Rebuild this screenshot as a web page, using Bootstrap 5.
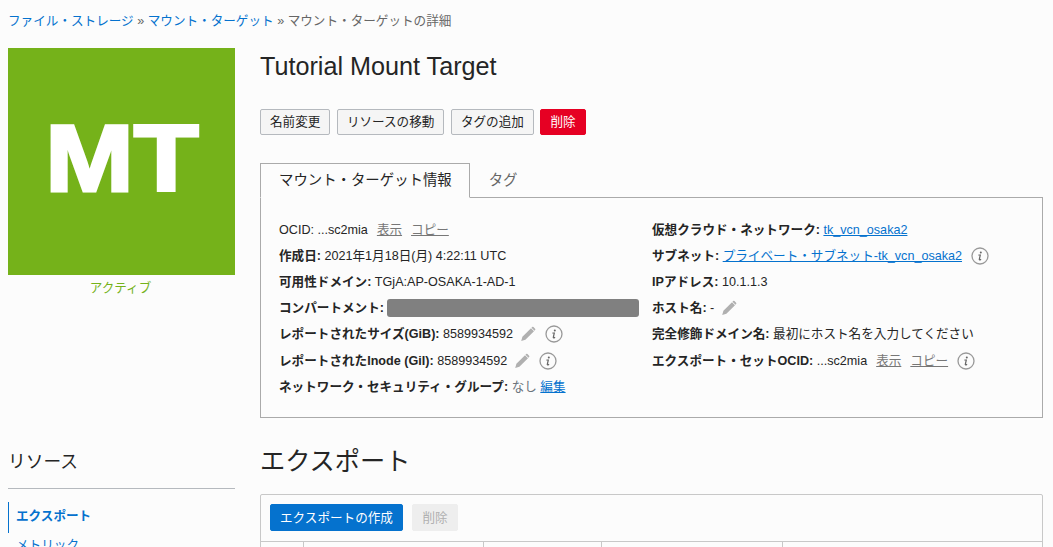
<!DOCTYPE html>
<html lang="ja">
<head>
<meta charset="utf-8">
<title>Tutorial Mount Target</title>
<link rel="stylesheet" href="https://cdn.jsdelivr.net/npm/bootstrap@5.3.0/dist/css/bootstrap.min.css">
<style>
html,body{height:547px;overflow:hidden}
body{background:#fcfcfc;color:#252525;font-family:"Liberation Sans","Noto Sans CJK JP",sans-serif;font-size:12.6px;padding:0 10px 0 8px}
a{color:#0572ce}
.crumbs{height:48px;padding-top:13px;font-size:12.6px;line-height:17px;color:#666}
.crumbs a{text-decoration:none}
.crumbs i{font-style:normal;margin:0 3.5px}
.side{width:227px;flex:none}
.main-col{margin-left:25px;flex:1;min-width:0}
.tile{height:227px;background:#75b21a;color:#fff;font-weight:700;font-size:94px;line-height:1;padding-top:64px;-webkit-text-stroke:3px #fff}
.tile span{display:inline-block;transform:scaleX(1.13)}
.state{color:#75b21a;font-size:12.6px;line-height:17px;margin-top:5px;padding-right:2px}
.title-h{font-size:25.2px;line-height:30px;margin:3px 0 28px;font-weight:400;color:#252525}
.act{font-size:12.6px;line-height:18px;height:26px;padding:3px 9px;border:1px solid #b5b9be;border-radius:2px;background:#f5f5f5;color:#252525;white-space:nowrap}
.act-del{background:#e60023;border-color:#e60023;color:#fff}
.act-blue{background:#0572ce;border-color:#0572ce;color:#fff;height:27px;padding:2px 9px}
.act-off{background:#eee;border-color:#eee;color:#b0b0b0;height:27px;padding:2px 9.5px;margin-left:9px}
.tabs{margin-top:28px;border-bottom:0;height:34px}
.tabs .nav-link{font-size:14.4px;line-height:20px;padding:6px 18px;border-radius:0;color:#666;border:1px solid transparent}
.tabs .nav-link.active{background:#fcfcfc;color:#252525;border:1px solid #aaa;border-bottom-color:#fcfcfc;position:relative;z-index:1;height:35px;padding-right:17px}
.info{border:1px solid #aaa;height:221px;padding:19px 18px 0;display:grid;grid-template-columns:373px 1fr}
.line{height:26.1px;line-height:26px;white-space:nowrap;display:flex;align-items:center}
.line b{font-weight:700;margin-right:3.5px}
.line b.thin{font-weight:400}
.gl{color:#777;text-decoration:underline;margin-left:9px}
.redact{display:inline-block;width:252px;height:18px;background:#808080;border-radius:3px}
.ic{flex:none}
.pen{width:16px;height:16px;margin-left:6.5px}
.inf{width:18px;height:18px;margin-left:9px}
.pen + .inf{margin-left:9.5px}
.sec-h{font-size:25.2px;line-height:32px;font-weight:400;margin:27px 0 17px;color:#252525}
.res-h{font-size:17.7px;line-height:28px;font-weight:400;margin:0;padding-bottom:12px;border-bottom:1px solid #b5b9be}
.res-gap{height:151px}
.res-list{margin-top:13px}
.res-list a{display:block;padding:0 7px;font-size:12.6px;line-height:25px;text-decoration:none;border-left:1px solid transparent}
.res-list a.on{border-left-color:#0572ce;font-weight:700;height:31px;line-height:29px}
.panel{border:1px solid #c8c8c8;border-radius:2px 2px 0 0;height:200px}
.tools{padding:9px;height:47px;border-bottom:1px solid #c8c8c8;display:flex;align-items:flex-start}
.cols{display:grid;grid-template-columns:43px 180px 118px 181px 1fr;height:40px}
.cols div{border-right:1px solid #c8c8c8}
.cols div:last-child{border-right:0}
</style>
</head>
<body>
<svg width="0" height="0" class="position-absolute">
  <defs>
    <symbol id="pen" viewBox="0 0 16 16"><path fill="#b0b0b0" d="M11 2.2l3 3-8.6 8.6-4.2 1.2 1.2-4.2zM12.1 1.1a1 1 0 0 1 1.4 0l1.6 1.6a1 1 0 0 1 0 1.4l-.6.6-3-3z"/></symbol>
    <symbol id="inf" viewBox="0 0 18 18"><circle cx="9" cy="9" r="8" fill="none" stroke="#999" stroke-width="1.3"/><circle cx="9.8" cy="5.4" r="1" fill="#666"/><path fill="none" stroke="#666" stroke-width="1.2" stroke-linecap="round" d="M7.8 8h1.5l-1 4.4c-.1.6.5.8 1.4.1"/></symbol>
  </defs>
</svg>
<div class="crumbs"><a href="#">ファイル・ストレージ</a><i>»</i><a href="#">マウント・ターゲット</a><i>»</i>マウント・ターゲットの詳細</div>
<div class="d-flex">
  <aside class="side">
    <div class="tile text-center"><span>MT</span></div>
    <div class="state text-center">アクティブ</div>
    <div class="res-gap"></div>
    <h3 class="res-h">リソース</h3>
    <div class="res-list">
      <a class="on" href="#">エクスポート</a>
      <a href="#">メトリック</a>
    </div>
  </aside>
  <main class="main-col">
    <h1 class="title-h">Tutorial Mount Target</h1>
    <div class="d-flex" style="column-gap:6.5px">
      <button class="btn act" type="button">名前変更</button>
      <button class="btn act" type="button">リソースの移動</button>
      <button class="btn act" type="button">タグの追加</button>
      <button class="btn act act-del" type="button">削除</button>
    </div>
    <ul class="nav nav-tabs tabs">
      <li class="nav-item"><a class="nav-link active" href="#">マウント・ターゲット情報</a></li>
      <li class="nav-item"><a class="nav-link" href="#">タグ</a></li>
    </ul>
    <div class="info">
      <div>
        <div class="line"><b class="thin">OCID:</b> ...sc2mia <a class="gl" href="#">表示</a><a class="gl" href="#">コピー</a></div>
        <div class="line"><b>作成日:</b> 2021年1月18日(月) 4:22:11 UTC</div>
        <div class="line"><b>可用性ドメイン:</b> TGjA:AP-OSAKA-1-AD-1</div>
        <div class="line"><b>コンパートメント:</b> <span class="redact"></span></div>
        <div class="line"><b>レポートされたサイズ(GiB):</b> 8589934592
          <svg class="ic pen"><use href="#pen"/></svg>
          <svg class="ic inf"><use href="#inf"/></svg></div>
        <div class="line"><b>レポートされたInode (GiI):</b> 8589934592
          <svg class="ic pen"><use href="#pen"/></svg>
          <svg class="ic inf"><use href="#inf"/></svg></div>
        <div class="line"><b>ネットワーク・セキュリティ・グループ:</b> <span class="text-secondary">なし</span>&nbsp;<a href="#">編集</a></div>
      </div>
      <div>
        <div class="line"><b>仮想クラウド・ネットワーク:</b> <a href="#">tk_vcn_osaka2</a></div>
        <div class="line"><b>サブネット:</b> <a href="#">プライベート・サブネット-tk_vcn_osaka2</a>
          <svg class="ic inf"><use href="#inf"/></svg></div>
        <div class="line"><b>IPアドレス:</b> 10.1.1.3</div>
        <div class="line"><b>ホスト名:</b> -
          <svg class="ic pen"><use href="#pen"/></svg></div>
        <div class="line"><b>完全修飾ドメイン名:</b> 最初にホスト名を入力してください</div>
        <div class="line"><b>エクスポート・セットOCID:</b> ...sc2mia <a class="gl" href="#">表示</a><a class="gl" href="#">コピー</a>
          <svg class="ic inf"><use href="#inf"/></svg></div>
      </div>
    </div>
    <h2 class="sec-h">エクスポート</h2>
    <div class="panel">
      <div class="tools">
        <button class="btn act act-blue" type="button">エクスポートの作成</button>
        <button class="btn act act-off" type="button">削除</button>
      </div>
      <div class="cols"><div></div><div></div><div></div><div></div><div></div></div>
    </div>
  </main>
</div>
</body>
</html>
